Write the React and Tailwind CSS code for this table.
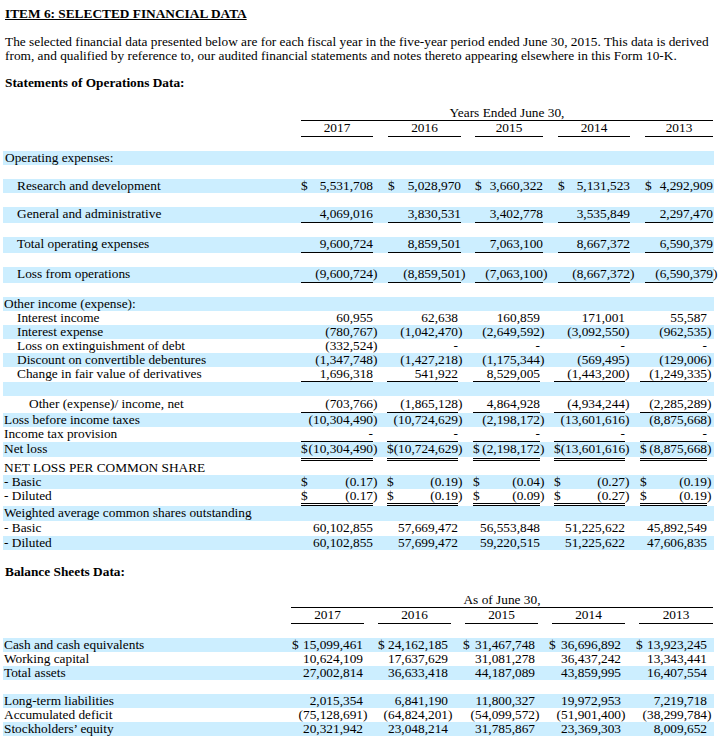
import { Fragment } from 'react';

const SERIF = "font-['Liberation_Serif','Times_New_Roman',serif]";
const BLUE = 'bg-[#cceeff]';

// column tracks: label, c1, gap, c2, gap, c3, gap, c4, gap, c5, trailing
const TOP = 'grid grid-cols-[298px_72px_15px_73px_14px_68px_15px_72px_15px_68px_1px]';
const MID = 'grid grid-cols-[298px_72px_14px_71px_15px_67px_14px_71px_15px_67px_7px]';
const BHEAD = 'grid grid-cols-[288px_73px_14px_73px_14px_73px_14px_73px_14px_74px_1px]';
const BDATA = 'grid grid-cols-[289px_71px_15px_70px_15px_72px_14px_72px_15px_71px_7px]';

const YEARS = ['2017', '2016', '2015', '2014', '2013'];

function Cell({ v = '', cls = '' }) {
  let [d, n] = v.includes('|') ? v.split('|') : ['', v];
  const close = n.endsWith(')');
  if (close) n = n.slice(0, -1);
  return (
    <div className={`flex justify-between whitespace-nowrap ${cls}`}>
      <span>{d}</span>
      <span>
        {n}
        {close && <span className="inline-block w-0">)</span>}
      </span>
    </div>
  );
}

function Row({ grid, label, vals = [], blue, h = 'h-[14px]', line, pad = 'pl-[1px]', top = '', cls = '' }) {
  return (
    <div className={`${grid} ${h} ${blue ? BLUE : ''} ${cls}`}>
      <div className={`${pad} ${top} whitespace-nowrap`}>{label}</div>
      {[0, 1, 2, 3, 4].map(i => (
        <Fragment key={i}>
          <Cell v={vals[i]} cls={`${top} ${line ? 'border-b border-black' : ''}`} />
          <div />
        </Fragment>
      ))}
    </div>
  );
}

function DoubleRule({ grid, h, cls }) {
  return (
    <div className={`${grid} ${h}`}>
      <div />
      {[0, 1, 2, 3, 4].map(i => (
        <Fragment key={i}>
          <div className={cls} />
          <div />
        </Fragment>
      ))}
    </div>
  );
}

function Head({ grid, title, cls = '' }) {
  return (
    <>
      <div className={`${grid} ${cls}`}>
        <div className="col-start-2 col-span-9 h-[15px] border-b border-black text-center">{title}</div>
      </div>
      <div className={grid}>
        <div />
        {YEARS.map(y => (
          <Fragment key={y}>
            <div className="h-[16px] border-b border-black text-center">{y}</div>
            <div />
          </Fragment>
        ))}
      </div>
    </>
  );
}

export default function App() {
  return (
    <div className={`${SERIF} text-[13.33px] leading-[14px] text-black bg-white w-[727px] min-h-[745px] pl-[3px] pt-[7px]`}>
      <div className="px-[2px]">
        <h1 className="font-bold underline">ITEM 6: SELECTED FINANCIAL DATA</h1>
        <p className="mt-[14px]">
          The selected financial data presented below are for each fiscal year in the five-year period ended June 30, 2015. This data is derived
          from, and qualified by reference to, our audited financial statements and notes thereto appearing elsewhere in this Form 10-K.
        </p>
        <p className="mt-[13px] font-bold">Statements of Operations Data:</p>
      </div>

      <div className="w-[711px]">
        {/* Statements of operations */}
        <Head grid={TOP} title="Years Ended June 30," cls="mt-[16px]" />
        <Row grid={TOP} label="Operating expenses:" blue pad="pl-[2px]" cls="mt-[14px]" />
        <Row grid={TOP} label="Research and development" blue pad="pl-[14px]" cls="mt-[14px]"
          vals={['$|5,531,708', '$|5,028,970', '$|3,660,322', '$|5,131,523', '$|4,292,909']} />
        <Row grid={TOP} label="General and administrative" blue pad="pl-[14px]" cls="mt-[14px]" h="h-[16px]" line
          vals={['4,069,016', '3,830,531', '3,402,778', '3,535,849', '2,297,470']} />
        <Row grid={TOP} label="Total operating expenses" blue pad="pl-[14px]" cls="mt-[14px]" h="h-[16px]" line
          vals={['9,600,724', '8,859,501', '7,063,100', '8,667,372', '6,590,379']} />
        <Row grid={TOP} label="Loss from operations" blue pad="pl-[14px]" cls="mt-[14px]" h="h-[16px]" line
          vals={['(9,600,724)', '(8,859,501)', '(7,063,100)', '(8,667,372)', '(6,590,379)']} />

        {/* Other income and per share */}
        <Row grid={MID} label="Other income (expense):" blue cls="mt-[14px]" />
        <Row grid={MID} label="Interest income" pad="pl-[14px]"
          vals={['60,955', '62,638', '160,859', '171,001', '55,587']} />
        <Row grid={MID} label="Interest expense" pad="pl-[14px]" blue
          vals={['(780,767)', '(1,042,470)', '(2,649,592)', '(3,092,550)', '(962,535)']} />
        <Row grid={MID} label="Loss on extinguishment of debt" pad="pl-[14px]"
          vals={['(332,524)', '-', '-', '-', '-']} />
        <Row grid={MID} label="Discount on convertible debentures" pad="pl-[14px]" blue
          vals={['(1,347,748)', '(1,427,218)', '(1,175,344)', '(569,495)', '(129,006)']} />
        <Row grid={MID} label="Change in fair value of derivatives" pad="pl-[14px]" h="h-[15px]" line
          vals={['1,696,318', '541,922', '8,529,005', '(1,443,200)', '(1,249,335)']} />
        <Row grid={MID} blue />
        <Row grid={MID} label="Other (expense)/ income, net" pad="pl-[26px]" h="h-[17px]" top="pt-[1px]" line
          vals={['(703,766)', '(1,865,128)', '4,864,928', '(4,934,244)', '(2,285,289)']} />
        <Row grid={MID} label="Loss before income taxes" blue
          vals={['(10,304,490)', '(10,724,629)', '(2,198,172)', '(13,601,616)', '(8,875,668)']} />
        <Row grid={MID} label="Income tax provision" h="h-[15px]" line
          vals={['-', '-', '-', '-', '-']} />
        <Row grid={MID} label="Net loss" blue h="h-[15px]"
          vals={['$|(10,304,490)', '$|(10,724,629)', '$|(2,198,172)', '$|(13,601,616)', '$|(8,875,668)']} />
        <DoubleRule grid={MID} h="h-[4px]" cls="mt-[1px] h-[3px] border-y border-black" />
        <Row grid={MID} label="NET LOSS PER COMMON SHARE" />
        <Row grid={MID} label="- Basic" blue
          vals={['$|(0.17)', '$|(0.19)', '$|(0.04)', '$|(0.27)', '$|(0.19)']} />
        <Row grid={MID} label="- Diluted"
          vals={['$|(0.17)', '$|(0.19)', '$|(0.09)', '$|(0.27)', '$|(0.19)']} />
        <DoubleRule grid={MID} h="h-[3px]" cls="h-[3px] border-y border-black" />
        <Row grid={MID} label="Weighted average common shares outstanding" blue h="h-[15px]" />
        <Row grid={MID} label="- Basic" h="h-[15px]"
          vals={['60,102,855', '57,669,472', '56,553,848', '51,225,622', '45,892,549']} />
        <Row grid={MID} label="- Diluted" blue
          vals={['60,102,855', '57,699,472', '59,220,515', '51,225,622', '47,606,835']} />

        {/* Balance sheets */}
        <p className="mt-[15px] pl-[2px] font-bold">Balance Sheets Data:</p>
        <Head grid={BHEAD} title="As of June 30," cls="mt-[14px]" />
        <Row grid={BDATA} label="Cash and cash equivalents" blue cls="mt-[14px]"
          vals={['$|15,099,461', '$|24,162,185', '$|31,467,748', '$|36,696,892', '$|13,923,245']} />
        <Row grid={BDATA} label="Working capital"
          vals={['10,624,109', '17,637,629', '31,081,278', '36,437,242', '13,343,441']} />
        <Row grid={BDATA} label="Total assets" blue
          vals={['27,002,814', '36,633,418', '44,187,089', '43,859,995', '16,407,554']} />
        <Row grid={BDATA} label="Long-term liabilities" blue cls="mt-[14px]"
          vals={['2,015,354', '6,841,190', '11,800,327', '19,972,953', '7,219,718']} />
        <Row grid={BDATA} label="Accumulated deficit"
          vals={['(75,128,691)', '(64,824,201)', '(54,099,572)', '(51,901,400)', '(38,299,784)']} />
        <Row grid={BDATA} label="Stockholders’ equity" blue
          vals={['20,321,942', '23,048,214', '31,785,867', '23,369,303', '8,009,652']} />
      </div>
    </div>
  );
}
